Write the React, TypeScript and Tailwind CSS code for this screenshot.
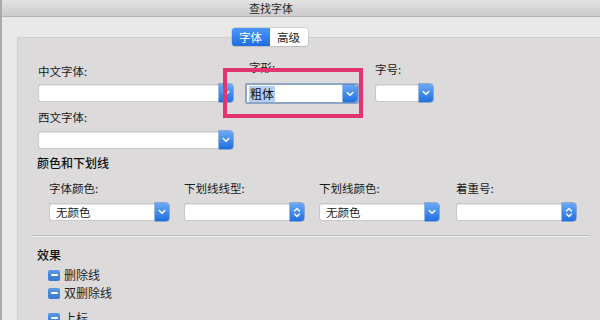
import React from 'react'

const font = { fontFamily: '"Noto Sans CJK SC", "Noto Sans", sans-serif' }

function Chevron() {
  return (
    <svg width="8" height="6" viewBox="0 0 8 6" fill="none">
      <path d="M1.2 1.5 L4 4.3 L6.8 1.5" stroke="white" strokeWidth="1.5" strokeLinecap="round" strokeLinejoin="round" />
    </svg>
  )
}

function Stepper() {
  return (
    <svg width="8" height="11" viewBox="0 0 8 11" fill="none">
      <path d="M1.5 4 L4 1.5 L6.5 4" stroke="white" strokeWidth="1.3" strokeLinecap="round" strokeLinejoin="round" />
      <path d="M1.5 7 L4 9.5 L6.5 7" stroke="white" strokeWidth="1.3" strokeLinecap="round" strokeLinejoin="round" />
    </svg>
  )
}

function ArrowBtn({ stepper }: { stepper?: boolean }) {
  return (
    <div className="w-[14px] self-stretch rounded-r-[3px] bg-gradient-to-b from-[#6aa9f6] to-[#1f6fe0] flex items-center justify-center shadow-[0_0_0_0.5px_#3b74c9]">
      {stepper ? <Stepper /> : <Chevron />}
    </div>
  )
}

function Select({ width, value, stepper }: { width: string; value?: string; stepper?: boolean }) {
  return (
    <div className="flex h-[18px]">
      <div
        className={`${width} h-full bg-white rounded-l-[3px] border border-[#c9c9c9] border-r-0 shadow-[inset_0_1px_0_#e6e6e6] text-[11.5px] leading-[16px] text-[#1a1a1a] pl-[6px]`}
      >
        {value}
      </div>
      <ArrowBtn stepper={stepper} />
    </div>
  )
}

function Check({ label }: { label: string }) {
  return (
    <div className="flex items-center gap-[4px] h-[18px]">
      <div className="w-[12px] h-[11px] rounded-[2px] bg-gradient-to-b from-[#5b98e6] to-[#3a78cf] flex items-center justify-center">
        <div className="w-[7px] h-[2px] bg-white rounded-[1px]" />
      </div>
      <span className="text-[12px] leading-[14px] text-[#1f1f1f]">{label}</span>
    </div>
  )
}

export default function App() {
  return (
    <div className="relative w-[600px] h-[320px] overflow-hidden bg-[#e8e8e8] border-l-2 border-[#a9a9a9]" style={font}>
      {/* 标题栏 */}
      <div className="h-[17px] pr-[60px] bg-gradient-to-b from-[#e3e3e3] to-[#cbcbcb] border-b border-[#b3b3b3] flex items-center justify-center">
        <span className="text-[11px] leading-[12px] text-[#2a2a2a]">查找字体</span>
      </div>

      <div className="pl-[15px] pt-[11px]">
        {/* 标签 */}
        <div className="relative z-10 flex justify-center mb-[-9px] pr-[78px]">
          <div className="flex h-[18px] rounded-[3px] overflow-hidden shadow-[0_0_0_0.5px_#b8b8b8,0_1px_1px_rgba(0,0,0,0.1)]">
            <div className="w-[38px] bg-gradient-to-b from-[#4d97f3] to-[#1d6ce0] text-white text-[11.5px] leading-[18px] text-center">字体</div>
            <div className="w-[38px] bg-white text-[#1f1f1f] text-[11.5px] leading-[18px] text-center">高级</div>
          </div>
        </div>

        {/* 面板 */}
        <div className="bg-[#dcdadb] border-l border-t border-[#cfcfcf] h-[300px]">
          {/* 第一行 */}
          <div className="flex items-start pl-[20px]">
            <div className="w-[207px] pt-[26px]">
              <div className="text-[11.5px] leading-[14px] text-[#1a1a1a]">中文字体:</div>
              <div className="mt-[6px]">
                <Select width="w-[181px]" />
              </div>
              <div className="mt-[8px] text-[11.5px] leading-[14px] text-[#1a1a1a]">西文字体:</div>
              <div className="mt-[7px]">
                <Select width="w-[181px]" />
              </div>
            </div>
            <div className="w-[130px] pt-[22px]">
              <div className="pl-[4px] text-[11.5px] leading-[14px] text-[#1a1a1a]">字形:</div>
              <div className="mt-[9px] flex h-[21px] w-[114px] border-2 border-[#8ea5c6] rounded-[2px] bg-white">
                <div className="flex-1 flex items-center pl-[2px]">
                  <span className="bg-[#b4cdf2] text-[12px] leading-[16px] text-[#111] px-[1px]">粗体</span>
                </div>
                <ArrowBtn />
              </div>
            </div>
            <div className="pt-[24px]">
              <div className="text-[11.5px] leading-[14px] text-[#1a1a1a]">字号:</div>
              <div className="mt-[8px]">
                <Select width="w-[44px]" />
              </div>
            </div>
          </div>

          {/* 颜色和下划线 */}
          <div className="pl-[19px] mt-[7px] text-[12px] leading-[14px] text-[#111] font-medium">颜色和下划线</div>
          <div className="pl-[31px] mt-[11px] grid grid-cols-[135px_135px_137px_135px]">
            {[
              { label: '字体颜色:', value: '无颜色', stepper: false },
              { label: '下划线线型:', value: '', stepper: true },
              { label: '下划线颜色:', value: '无颜色', stepper: false },
              { label: '着重号:', value: '', stepper: true },
            ].map((c) => (
              <div key={c.label}>
                <div className="text-[11.5px] leading-[14px] text-[#1a1a1a]">{c.label}</div>
                <div className="mt-[8px]">
                  <Select width="w-[106px]" value={c.value} stepper={c.stepper} />
                </div>
              </div>
            ))}
          </div>

          {/* 分隔线 */}
          <div className="ml-[13px] mr-[10px] mt-[14px] h-[2px] border-t border-[#bdbdbd] border-b border-b-[#ececec]" />

          {/* 效果 */}
          <div className="pl-[19px] mt-[11px] text-[12px] leading-[14px] text-[#111] font-medium">效果</div>
          <div className="pl-[30px] mt-[4px]">
            <Check label="删除线" />
            <Check label="双删除线" />
            <div className="mt-[7px]">
              <Check label="上标" />
            </div>
          </div>
        </div>
      </div>

      {/* 红色标注框 */}
      <div className="absolute left-[221px] top-[68px] w-[140px] h-[50px] border-[4px] border-[#e23570]" />
    </div>
  )
}
